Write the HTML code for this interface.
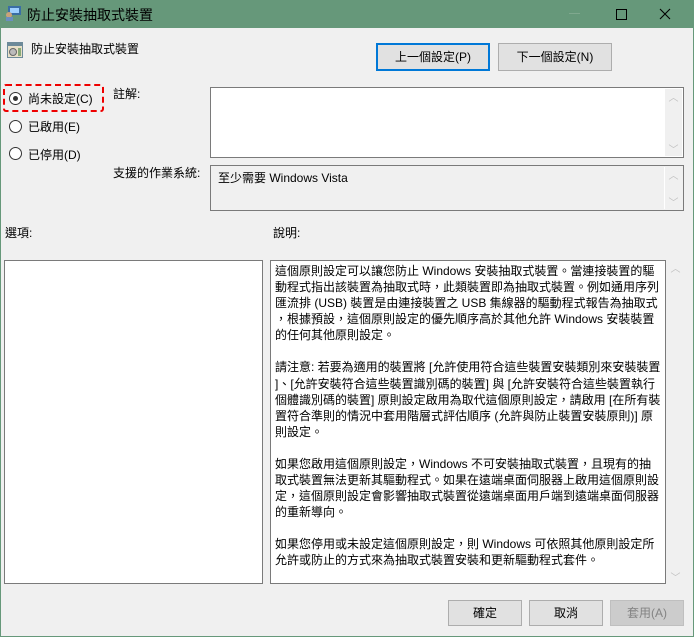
<!DOCTYPE html><html><head><meta charset="utf-8"><style>
body{margin:0;width:694px;height:637px;overflow:hidden;font-family:"Liberation Sans","Noto Sans CJK TC",sans-serif;font-size:12px;color:#000;position:relative;background:#f0f0f0}
.frame{position:absolute;left:0;top:0;width:692px;height:635px;border:1px solid #66987a}
.tb{position:absolute;left:0;top:0;width:694px;height:28px;background:#66987a}
.a{position:absolute}
.btn{position:absolute;background:#e1e1e1;border:1px solid #adadad;text-align:center;box-sizing:border-box;font-size:12px}
.box{position:absolute;background:#fff;border:1px solid #7a7a7a;box-sizing:border-box}
.sb{position:absolute;right:0;top:0;bottom:0;width:17px;background:#f0f0f0;color:#c0c0c0;font-size:10px;text-align:center}
.rad{position:absolute;width:11px;height:11px;border:1px solid #333;border-radius:50%;background:#fff}
.desc p{margin:0 0 16px 0}
</style></head><body>
<div class="tb"></div>
<svg class="a" style="left:5px;top:5px" width="18" height="16"><rect x="3" y="1" width="13" height="9" fill="#3a6ea5"/><rect x="5" y="3" width="9" height="5" fill="#9fd0ff"/><circle cx="4" cy="10" r="3" fill="#c9a27a"/><rect x="1" y="12" width="7" height="4" fill="#6b8ec0"/></svg>
<div class="a" style="left:27px;top:5px;font-size:14px">防止安裝抽取式裝置</div>
<div class="a" style="left:569px;top:13px;width:11px;height:1px;background:#7fa88e"></div>
<div class="a" style="left:616px;top:9px;width:9px;height:9px;border:1px solid #000"></div>
<svg class="a" style="left:659px;top:8px" width="12" height="12"><path d="M1 1L11 11M11 1L1 11" stroke="#000" stroke-width="1.1"/></svg>
<svg class="a" style="left:7px;top:42px" width="16" height="16"><rect x="0" y="0" width="16" height="16" fill="#6d8a99"/><rect x="1" y="4" width="14" height="11" fill="#e8e0c8"/><circle cx="6" cy="10" r="3.5" fill="#bbb" stroke="#666"/><rect x="11" y="6" width="3" height="8" fill="#8a7"/></svg>
<div class="a" style="left:31px;top:40px">防止安裝抽取式裝置</div>
<div class="btn" style="left:376px;top:43px;width:114px;height:28px;border-color:#0078d7;border-width:2px;line-height:24px">上一個設定(P)</div>
<div class="btn" style="left:498px;top:43px;width:114px;height:28px;line-height:26px">下一個設定(N)</div>
<div class="a" style="left:3px;top:84px;width:101px;height:28px;border:2px dashed #e00;border-radius:3px;box-sizing:border-box"></div>
<div class="rad" style="left:9px;top:92px"></div><div class="a" style="left:13px;top:96px;width:5px;height:5px;border-radius:50%;background:#333"></div>
<div class="a" style="left:28px;top:90px">尚未設定(C)</div>
<div class="rad" style="left:9px;top:120px"></div><div class="a" style="left:28px;top:118px">已啟用(E)</div>
<div class="rad" style="left:9px;top:147px"></div><div class="a" style="left:28px;top:146px">已停用(D)</div>
<div class="a" style="left:113px;top:85px">註解:</div>
<div class="box" style="left:210px;top:87px;width:474px;height:71px"><div class="sb" style="top:1px;bottom:1px;right:1px">︿<div style="position:absolute;bottom:0;width:17px">﹀</div></div></div>
<div class="a" style="left:113px;top:164px">支援的作業系統:</div>
<div class="box" style="left:210px;top:165px;width:474px;height:46px;background:#f0f0f0"><div class="a" style="left:7px;top:3px">至少需要 Windows Vista</div><div class="sb" style="top:1px;bottom:1px;right:1px;border-left:1px solid #fff">︿<div style="position:absolute;bottom:0;width:17px">﹀</div></div></div>
<div class="a" style="left:5px;top:224px">選項:</div>
<div class="a" style="left:273px;top:224px">說明:</div>
<div class="box" style="left:4px;top:260px;width:259px;height:324px"></div>
<div class="box desc" style="left:270px;top:260px;width:396px;height:324px;padding:2px 3px 2px 4px;line-height:16.1px;font-size:12px;white-space:nowrap;overflow:hidden">
<p>這個原則設定可以讓您防止 Windows 安裝抽取式裝置。當連接裝置的驅<br>動程式指出該裝置為抽取式時，此類裝置即為抽取式裝置。例如通用序列<br>匯流排 (USB) 裝置是由連接裝置之 USB 集線器的驅動程式報告為抽取式<br>，根據預設，這個原則設定的優先順序高於其他允許 Windows 安裝裝置<br>的任何其他原則設定。</p>
<p>請注意: 若要為適用的裝置將 [允許使用符合這些裝置安裝類別來安裝裝置<br>]、[允許安裝符合這些裝置識別碼的裝置] 與 [允許安裝符合這些裝置執行<br>個體識別碼的裝置] 原則設定啟用為取代這個原則設定，請啟用 [在所有裝<br>置符合準則的情況中套用階層式評估順序 (允許與防止裝置安裝原則)] 原<br>則設定。</p>
<p>如果您啟用這個原則設定，Windows 不可安裝抽取式裝置，且現有的抽<br>取式裝置無法更新其驅動程式。如果在遠端桌面伺服器上啟用這個原則設<br>定，這個原則設定會影響抽取式裝置從遠端桌面用戶端到遠端桌面伺服器<br>的重新導向。</p>
<p>如果您停用或未設定這個原則設定，則 Windows 可依照其他原則設定所<br>允許或防止的方式來為抽取式裝置安裝和更新驅動程式套件。</p>
</div>
<div class="a" style="left:667px;top:260px;width:17px;height:324px;color:#c0c0c0;font-size:10px;text-align:center">︿<div style="position:absolute;bottom:0;width:17px">﹀</div></div>
<div class="btn" style="left:448px;top:600px;width:74px;height:26px;line-height:24px">確定</div>
<div class="btn" style="left:529px;top:600px;width:74px;height:26px;line-height:24px">取消</div>
<div class="btn" style="left:610px;top:600px;width:74px;height:26px;line-height:24px;background:#ccc;border-color:#bfbfbf;color:#838383">套用(A)</div>
<div class="frame"></div>
</body></html>
